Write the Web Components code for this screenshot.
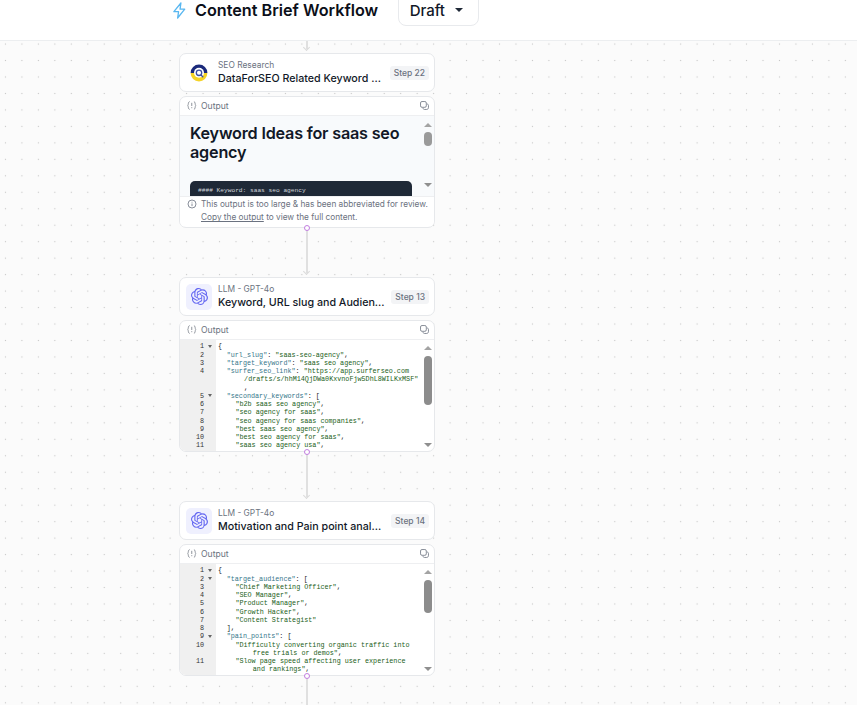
<!DOCTYPE html>
<html>
<head>
<meta charset="utf-8">
<title>Content Brief Workflow</title>
<style>
  html, body { margin: 0; height: 100%; overflow: hidden; background: #fff; }
  body { font-family: Inter, "Liberation Sans", sans-serif; color: #111827; }
</style>
</head>
<body>
<app-header title-text="Content Brief Workflow" status="Draft"></app-header>
<flow-canvas>
  <flow-edge kind="stub"></flow-edge>
  <flow-step category="SEO Research" name="DataForSEO Related Keyword ..." step="Step 22" icon="seo">
    <markdown-output></markdown-output>
  </flow-step>
  <flow-edge></flow-edge>
  <flow-step category="LLM - GPT-4o" name="Keyword, URL slug and Audien..." step="Step 13" icon="llm">
    <code-output doc="slug"></code-output>
  </flow-step>
  <flow-edge></flow-edge>
  <flow-step category="LLM - GPT-4o" name="Motivation and Pain point anal..." step="Step 14" icon="llm">
    <code-output doc="pain"></code-output>
  </flow-step>
  <flow-edge></flow-edge>
</flow-canvas>

<script>
(function () {
  const scrollButtons = `
    <span class="up"></span><span class="down"></span>
  `;
  const scrollStyle = `
    .bar { position: absolute; top: 0; right: 0; bottom: 0; width: 14px; }
    .up, .down { position: absolute; left: 4px; width: 0; height: 0; border-left: 4px solid transparent; border-right: 4px solid transparent; }
    .up { top: 7px; border-bottom: 4.5px solid #a3a3a3; }
    .down { bottom: 9px; border-top: 4.5px solid #8f8f8f; }
    .thumb { position: absolute; left: 4px; width: 8px; border-radius: 4px; background: #8c8c8c; }
  `;

  class AppHeader extends HTMLElement {
    constructor() {
      super();
      this.attachShadow({ mode: 'open' });
      this.shadowRoot.innerHTML = `
        <style>
          :host { display: flex; align-items: center; height: 40px; box-sizing: content-box; background: #fff; border-bottom: 1px solid #eceef0; padding-left: 172px; overflow: hidden; }
          .bolt { width: 15px; height: 17px; margin-top: -20px; flex: none; }
          h1 { margin: -21px 0 0 8px; font-size: 16.2px; line-height: 20px; font-weight: 600; color: #0b0f19; white-space: nowrap; }
          .status { display: flex; align-items: center; gap: 10px; margin: -28px 0 0 19.5px; height: 40px; box-sizing: border-box; width: 81px; padding: 8px 0 0 11px; border: 1px solid #e8eaed; border-radius: 8px; font-size: 15px; font-weight: 500; color: #111827; }
          .caret { width: 0; height: 0; border-left: 4.5px solid transparent; border-right: 4.5px solid transparent; border-top: 4px solid #1f2937; }
        </style>
        <svg class="bolt" viewBox="0 0 16 18" fill="none" stroke="#59b7f0" stroke-width="1.4" stroke-linejoin="round"><path d="M9.5 1 2 10.2h5L6 17l7.6-9.4h-5z"/></svg>
        <h1></h1>
        <div class="status"><span></span><i class="caret"></i></div>
      `;
    }
    connectedCallback() {
      this.shadowRoot.querySelector('h1').textContent = this.getAttribute('title-text');
      this.shadowRoot.querySelector('.status span').textContent = this.getAttribute('status');
    }
  }

  class FlowCanvas extends HTMLElement {
    constructor() {
      super();
      this.attachShadow({ mode: 'open' });
      this.shadowRoot.innerHTML = `
        <style>
          :host {
            display: flex; flex-direction: column; height: 664px; overflow: hidden; box-sizing: border-box; padding-left: 179px;
            background-color: #fbfbfb;
            background-image: radial-gradient(circle, #c6c6c6 0.6px, transparent 1px);
            background-size: 16.47px 16.47px;
            background-position: -2.8px -5.2px;
          }
        </style>
        <slot></slot>
      `;
    }
  }

  class FlowEdge extends HTMLElement {
    constructor() {
      super();
      this.attachShadow({ mode: 'open' });
      this.shadowRoot.innerHTML = `
        <style>
          :host { display: block; position: relative; width: 256px; height: 49px; flex: none; }
          :host([kind="stub"]) { height: 12.4px; }
          :host([kind="stub"]) .handle { display: none; }
          .line { position: absolute; left: 127px; top: 0; bottom: 4px; width: 2px; background: #e0e0e0; }
          .tip { position: absolute; left: 124.5px; bottom: 3px; width: 4px; height: 4px; border-right: 1.5px solid #dadada; border-bottom: 1.5px solid #dadada; transform: rotate(45deg); }
          .handle { position: absolute; left: 125px; top: -3px; width: 4px; height: 4px; border: 1.2px solid #c27ee0; border-radius: 50%; background: #fff; z-index: 2; }
        </style>
        <div class="line"></div><div class="tip"></div><div class="handle"></div>
      `;
    }
  }

  class FlowStep extends HTMLElement {
    constructor() {
      super();
      this.attachShadow({ mode: 'open' });
      this.shadowRoot.innerHTML = `
        <style>
          :host { display: flex; flex-direction: column; gap: 4px; width: 256px; flex: none; position: relative; z-index: 1; }
          .card { display: flex; align-items: center; height: 39px; box-sizing: border-box; padding: 0 5px 0 6px; background: #fff; border: 1px solid #e6e8eb; border-radius: 7px; }
          .icon { display: flex; align-items: center; justify-content: center; width: 26px; height: 26px; border-radius: 5px; flex: none; }
          .icon.llm { background: #eff0fe; }
          .text { margin-left: 6px; flex: 1; min-width: 0; }
          .category { font-size: 8.4px; line-height: 11px; color: #6b7280; }
          .name { font-size: 10.7px; line-height: 15px; font-weight: 500; color: #111827; white-space: nowrap; }
          .badge { padding: 0 4px; height: 14px; line-height: 14px; border-radius: 3px; background: #f3f4f6; color: #6b7280; font-size: 8.5px; font-weight: 500; white-space: nowrap; flex: none; }
        </style>
        <div class="card">
          <div class="icon"></div>
          <div class="text"><div class="category"></div><div class="name"></div></div>
          <div class="badge"></div>
        </div>
        <slot></slot>
      `;
    }
    connectedCallback() {
      const $ = (s) => this.shadowRoot.querySelector(s);
      $('.category').textContent = this.getAttribute('category');
      $('.name').textContent = this.getAttribute('name');
      $('.badge').textContent = this.getAttribute('step');
      const icon = $('.icon');
      if (this.getAttribute('icon') === 'llm') {
        icon.classList.add('llm');
        icon.innerHTML = `<svg width="17" height="17" viewBox="0 0 24 24" fill="#6366f1"><path d="M22.2819 9.8211a5.9847 5.9847 0 0 0-.5157-4.9108 6.0462 6.0462 0 0 0-6.5098-2.9A6.0651 6.0651 0 0 0 4.9807 4.1818a5.9847 5.9847 0 0 0-3.9977 2.9 6.0462 6.0462 0 0 0 .7427 7.0966 5.98 5.98 0 0 0 .511 4.9107 6.051 6.051 0 0 0 6.5146 2.9001A5.9847 5.9847 0 0 0 13.2599 24a6.0557 6.0557 0 0 0 5.7718-4.2058 5.9894 5.9894 0 0 0 3.9977-2.9001 6.0557 6.0557 0 0 0-.7475-7.0729zm-9.022 12.6081a4.4755 4.4755 0 0 1-2.8764-1.0408l.1419-.0804 4.7783-2.7582a.7948.7948 0 0 0 .3927-.6813v-6.7369l2.02 1.1686a.071.071 0 0 1 .038.052v5.5826a4.504 4.504 0 0 1-4.4945 4.4944zm-9.6607-4.1254a4.4708 4.4708 0 0 1-.5346-3.0137l.142.0852 4.783 2.7582a.7712.7712 0 0 0 .7806 0l5.8428-3.3685v2.3324a.0804.0804 0 0 1-.0332.0615L9.74 19.9502a4.4992 4.4992 0 0 1-6.1408-1.6464zM2.3408 7.8956a4.485 4.485 0 0 1 2.3655-1.9728V11.6a.7664.7664 0 0 0 .3879.6765l5.8144 3.3543-2.0201 1.1685a.0757.0757 0 0 1-.071 0l-4.8303-2.7865A4.504 4.504 0 0 1 2.3408 7.872zm16.5963 3.8558L13.1038 8.364 15.1192 7.2a.0757.0757 0 0 1 .071 0l4.8303 2.7913a4.4944 4.4944 0 0 1-.6765 8.1042v-5.6772a.79.79 0 0 0-.407-.667zm2.0107-3.0231l-.142-.0852-4.7735-2.7818a.7759.7759 0 0 0-.7854 0L9.409 9.2297V6.8974a.0662.0662 0 0 1 .0284-.0615l4.8303-2.7866a4.4992 4.4992 0 0 1 6.6802 4.66zM8.3065 12.863l-2.02-1.1638a.0804.0804 0 0 1-.038-.0567V6.0742a4.4992 4.4992 0 0 1 7.3757-3.4537l-.142.0805L8.704 5.459a.7948.7948 0 0 0-.3927.6813zm1.0976-2.3654l2.602-1.4998 2.6069 1.4998v2.9994l-2.5974 1.4997-2.6067-1.4997Z"/></svg>`;
      } else {
        icon.innerHTML = `<svg width="18" height="18" viewBox="0 0 18 18"><path d="M.6 9a8.4 8.4 0 0 1 16.8 0z" fill="#1b2a7b"/><path d="M.6 9a8.4 8.4 0 0 0 16.8 0z" fill="#f5d327"/><circle cx="9" cy="8.8" r="5" fill="#fff"/><circle cx="9" cy="8.8" r="2.7" fill="none" stroke="#3c4fa3" stroke-width="1.3"/><path d="M10.8 10.8l2.4 2.4" stroke="#3c4fa3" stroke-width="1.3"/></svg>`;
      }
    }
  }

  const outputBarStyle = `
    :host { display: block; position: relative; height: 132px; box-sizing: border-box; background: #fff; border: 1px solid #e6e8eb; border-radius: 7px; overflow: hidden; }
    .head { display: flex; align-items: center; height: 19px; box-sizing: border-box; padding: 0 5px 1px 7px; border-bottom: 1px solid #eeeff1; color: #6b7280; font-size: 8.6px; }
    .braces { width: 14px; flex: none; }
    .head .label { flex: 1; }
  `;
  const outputHead = `
    <div class="head">
      <svg class="braces" width="14" height="9" viewBox="0 0 14 9" fill="none" stroke="#8f949c" stroke-width="1"><path d="M2.6.5C1 1 1.6 3.4.8 4.5c.8 1.1.2 3.5 1.8 4M6.9.5c1.6.5 1 2.9 1.8 4-.8 1.1-.2 3.5-1.8 4M4.75 1.8v3.2M4.75 6.2v1"/></svg>
      <span class="label">Output</span>
      <svg width="9" height="9" viewBox="0 0 10 10" fill="none" stroke="#6b7280" stroke-width="0.9"><rect x="0.6" y="0.6" width="6.4" height="6.4" rx="1.6"/><path d="M8 3.2c.8.2 1.4.9 1.4 1.7v2.5c0 1.1-.9 2-2 2H5c-.9 0-1.6-.6-1.8-1.4"/></svg>
    </div>
  `;

  class MarkdownOutput extends HTMLElement {
    constructor() {
      super();
      this.attachShadow({ mode: 'open' });
      this.shadowRoot.innerHTML = `
        <style>
          ${outputBarStyle}
          ${scrollStyle}
          .body { position: relative; height: 80px; background: #f8fafc; overflow: hidden; padding: 7.5px 0 0 10px; box-sizing: border-box; }
          h2 { margin: 0; width: 225px; font-size: 16.2px; line-height: 19px; font-weight: 600; color: #111827; letter-spacing: -0.2px; }
          pre { margin: 19.5px 0 0; width: 222px; height: 30px; box-sizing: border-box; padding: 6px 8px; background: #1f2937; border-radius: 5px; color: #d1d5db; font: 6.2px "Liberation Mono", monospace; }
          .thumb { top: 16px; height: 14px; background: #9a9a9a; }
          .note { display: flex; gap: 4px; padding: 1px 0 0 7px; height: 30px; box-sizing: border-box; background: #fff; border-top: 1px solid #eeeff1; font-size: 8.27px; line-height: 13px; color: #6b7280; white-space: nowrap; }
          .note svg { flex: none; margin-top: 1px; }
          u { text-underline-offset: 1px; }
        </style>
        ${outputHead}
        <div class="body">
          <h2>Keyword Ideas for saas seo agency</h2>
          <pre>#### Keyword: saas seo agency</pre>
          <div class="bar">${scrollButtons}<div class="thumb"></div></div>
        </div>
        <div class="note">
          <svg width="10" height="10" viewBox="0 0 10 10" fill="none" stroke="#6b7280" stroke-width="0.8"><circle cx="5" cy="5" r="4"/><path d="M5 4.5v2.6M5 2.8v.8"/></svg>
          <div>This output is too large &amp; has been abbreviated for review.<br><u>Copy the output</u> to view the full content.</div>
        </div>
      `;
    }
  }

  // line number (blank for a wrapped row), fold mark, indent, text
  const DOCS = {
    slug: {
      thumb: [16, 49],
      rows: [
        ['1', 1, 0, '{'],
        ['2', 0, 1, '"url_slug": "saas-seo-agency",'],
        ['3', 0, 1, '"target_keyword": "saas seo agency",'],
        ['4', 0, 1, '"surfer_seo_link": "https://app.surferseo.com'],
        ['', 0, 3, '/drafts/s/hhM14QjDWa0KxvnoFjw5DhL8WILKxMSF"'],
        ['', 0, 3, ','],
        ['5', 1, 1, '"secondary_keywords": ['],
        ['6', 0, 2, '"b2b saas seo agency",'],
        ['7', 0, 2, '"seo agency for saas",'],
        ['8', 0, 2, '"seo agency for saas companies",'],
        ['9', 0, 2, '"best saas seo agency",'],
        ['10', 0, 2, '"best seo agency for saas",'],
        ['11', 0, 2, '"saas seo agency usa",'],
        ['12', 0, 2, '"simple tiger saas seo agency",'],
      ],
    },
    pain: {
      thumb: [16, 33],
      rows: [
        ['1', 1, 0, '{'],
        ['2', 1, 1, '"target_audience": ['],
        ['3', 0, 2, '"Chief Marketing Officer",'],
        ['4', 0, 2, '"SEO Manager",'],
        ['5', 0, 2, '"Product Manager",'],
        ['6', 0, 2, '"Growth Hacker",'],
        ['7', 0, 2, '"Content Strategist"'],
        ['8', 0, 1, '],'],
        ['9', 1, 1, '"pain_points": ['],
        ['10', 0, 2, '"Difficulty converting organic traffic into'],
        ['', 0, 4, 'free trials or demos",'],
        ['11', 0, 2, '"Slow page speed affecting user experience'],
        ['', 0, 4, 'and rankings",'],
        ['12', 0, 2, '"Inadequate tracking of MQLs and SQLs from'],
      ],
    },
  };

  class CodeOutput extends HTMLElement {
    constructor() {
      super();
      this.attachShadow({ mode: 'open' });
      this.shadowRoot.innerHTML = `
        <style>
          ${outputBarStyle}
          ${scrollStyle}
          .body { position: relative; display: flex; height: 111px; overflow: hidden; font: 6.75px/8.25px "Liberation Mono", monospace; }
          .gutter { flex: none; width: 36px; padding-top: 2px; background: #f0f0f0; color: #333; }
          .num { position: relative; height: 8.25px; padding-right: 12px; text-align: right; }
          .fold { position: absolute; right: 4px; top: 2.5px; width: 0; height: 0; border-left: 2.5px solid transparent; border-right: 2.5px solid transparent; border-top: 3px solid #666; }
          .code { flex: 1; padding: 2px 0 0 2px; white-space: pre; color: #222; }
          .row { height: 8.25px; }
          .key { color: #35768a; }
          .str { color: #1a5e20; }
          .up { top: 6px; }
          .down { bottom: 4px; }
        </style>
        ${outputHead}
        <div class="body">
          <div class="gutter"></div>
          <div class="code"></div>
          <div class="bar">${scrollButtons}<div class="thumb"></div></div>
        </div>
      `;
    }

    connectedCallback() {
      const doc = DOCS[this.getAttribute('doc')];
      const gutter = this.shadowRoot.querySelector('.gutter');
      const code = this.shadowRoot.querySelector('.code');
      const thumb = this.shadowRoot.querySelector('.thumb');
      thumb.style.top = doc.thumb[0] + 'px';
      thumb.style.height = doc.thumb[1] + 'px';
      doc.rows.forEach(([num, fold, indent, text]) => {
        const n = document.createElement('div');
        n.className = 'num';
        n.textContent = num;
        if (fold) {
          const mark = document.createElement('i');
          mark.className = 'fold';
          n.append(mark);
        }
        gutter.append(n);

        const row = document.createElement('div');
        row.className = 'row';
        row.style.paddingLeft = indent * 8.7 + 'px';
        const keyMatch = text.match(/^("[^"]*")(: )(.*)$/);
        if (keyMatch) {
          this.addSpan(row, 'key', keyMatch[1]);
          row.append(keyMatch[2]);
          this.addValue(row, keyMatch[3]);
        } else {
          this.addValue(row, text);
        }
        code.append(row);
      });
    }

    addSpan(row, cls, text) {
      const span = document.createElement('span');
      span.className = cls;
      span.textContent = text;
      row.append(span);
    }

    addValue(row, text) {
      if (/[\w"]/.test(text)) {
        const tail = text.endsWith(',') ? ',' : '';
        this.addSpan(row, 'str', tail ? text.slice(0, -1) : text);
        row.append(tail);
      } else {
        row.append(text);
      }
    }
  }

  customElements.define('app-header', AppHeader);
  customElements.define('flow-canvas', FlowCanvas);
  customElements.define('flow-edge', FlowEdge);
  customElements.define('flow-step', FlowStep);
  customElements.define('markdown-output', MarkdownOutput);
  customElements.define('code-output', CodeOutput);
})();
</script>
</body>
</html>
